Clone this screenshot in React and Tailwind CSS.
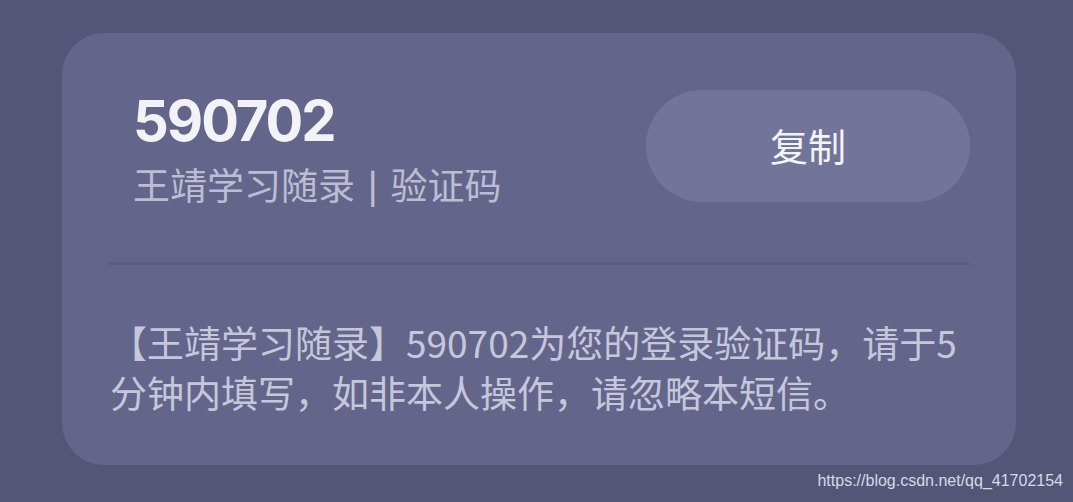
export default function App() {
  return (
    <div className="relative h-[502px] w-[1073px] overflow-hidden bg-[#545678] pl-[62px] pt-[33px] font-['Noto_Sans_CJK_SC',sans-serif]">
      {/* Card */}
      <div className="h-[432px] w-[954px] rounded-[42px] bg-[#63668a] px-[46px] pt-[57px]">
        {/* Header */}
        <div className="flex items-start justify-between">
          <div className="pl-[25px] pt-[3px]">
            <div className="font-['Inter',sans-serif] text-[56px] font-bold leading-[56px] tracking-[-2px] text-[#f2f2f7]">
              590702
            </div>
            <div className="mt-[13px] flex items-center text-[37px] leading-[44px] text-[#bcbdd2]">
              <span>王靖学习随录</span>
              <span className="mx-[13px] text-[32px] font-bold">|</span>
              <span>验证码</span>
            </div>
          </div>
          <button className="h-[112px] w-[324px] rounded-full bg-[#727599] pb-[4px] text-[38px] text-[#f4f4f8]">
            复制
          </button>
        </div>

        {/* Divider */}
        <div className="mt-[56px] h-[3px] bg-[#5a5d80]" />

        {/* Body */}
        <p className="mt-[52px] pl-[2px] text-[37px] leading-[50px] text-[#c6c7db]">
          【王靖学习随录】590702为您的登录验证码，请于5<br />
          分钟内填写，如非本人操作，请忽略本短信。
        </p>
      </div>

      {/* Watermark */}
      <div className="absolute right-[10px] top-[469px] font-['Liberation_Sans',sans-serif] text-[16px] text-[#d8d9e6]">
        https://blog.csdn.net/qq_41702154
      </div>
    </div>
  )
}
